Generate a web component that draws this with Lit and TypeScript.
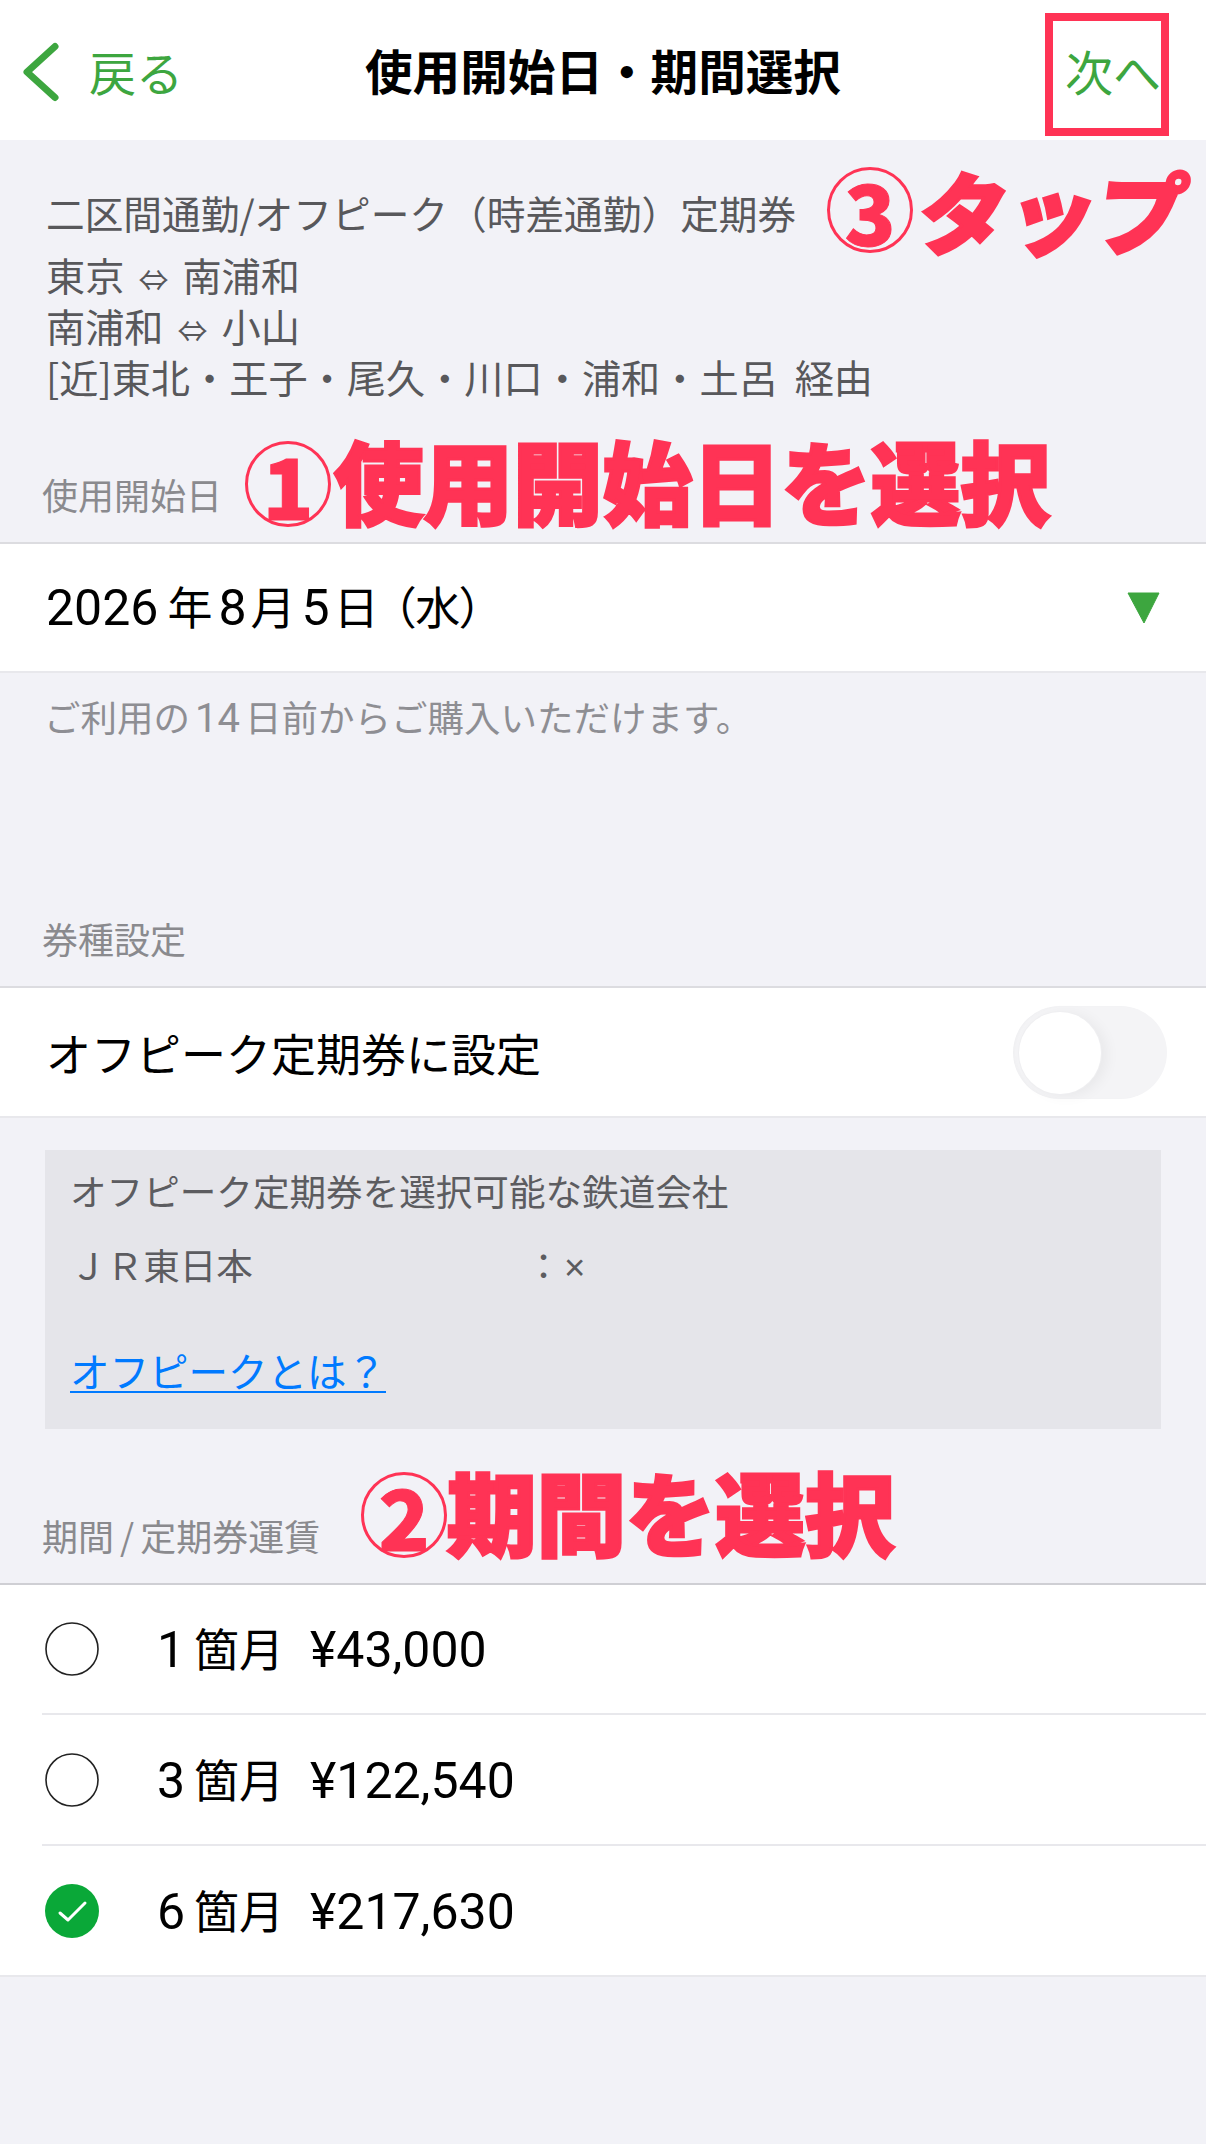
import { LitElement, html, css } from "lit";
import { customElement } from "lit/decorators.js";

@customElement("app-root")
export class AppRoot extends LitElement {
  static styles = css`
    :host { display: block; width: 1206px; height: 2144px; font-family: "Noto Sans CJK JP", "Noto Sans", sans-serif; }
    .page { position: relative; width: 1206px; height: 2144px; background: #f2f2f7; overflow: hidden; display: flex; flex-direction: column; }
    .nav { height: 140px; background: #fff; display: grid; grid-template-columns: 1fr auto 1fr; align-items: center; flex: none; }
    .back { display: flex; align-items: center; gap: 30px; padding-left: 23px; color: #3da63f; font-size: 47px; line-height: 1; }
    .back svg { display: block; margin-top: 4px; }
    .title { font-size: 47.6px; font-weight: 700; color: #000; line-height: 1; }
    .next { justify-self: end; padding-right: 45px; color: #3da63f; font-size: 48px; line-height: 1; }
    .route { padding: 41px 46px 0; color: #58585b; font-size: 39.2px; line-height: 51px; flex: none; }
    .route div { white-space: nowrap; }
    .route .l1 { font-size: 38.7px; line-height: 62px; margin-bottom: 6px; }
    .arr { font-size: 30px; line-height: 0; margin: 0 14px; }
    .sp { margin-left: 8px; }
    .label { color: #8a8a8e; font-size: 36px; line-height: 48px; padding-left: 42px; flex: none; }
    .label.first { margin-top: 68px; }
    .label.second { margin-top: 172px; }
    .label.third { margin-top: 82px; }
    .slash { margin: 0 6px; }
    .row { background: #fff; border-top: 2px solid #dcdce0; border-bottom: 2px solid #e8e8ec; box-sizing: border-box; display: flex; align-items: center; justify-content: space-between; padding: 0 46px; color: #000; font-size: 45px; line-height: 1; flex: none; margin-top: 24px; }
    .date { height: 131px; }
    .n { font-family: Roboto, sans-serif; font-size: 50px; margin: 0 4px 0 6px; }
    .n.y { margin: 0 9px 0 0; }
    .paren { font-feature-settings: "palt"; margin-left: 14px; }
    .tri { display: block; }
    .note { color: #8e8e93; font-size: 36.5px; line-height: 46px; padding: 21px 44px 0; flex: none; white-space: nowrap; }
    .note .n { font-size: 40px; margin: 0 5px; }
    .off { height: 132px; padding-right: 39px; }
    .switch { width: 154px; height: 93px; border-radius: 47px; background: #f4f4f6; position: relative; flex: none; box-shadow: inset 2px 0 3px rgba(0,0,0,.02); }
    .knob { position: absolute; left: 6px; top: 6px; width: 82px; height: 82px; border-radius: 50%; background: #fff; box-shadow: 0 0 0 1px #efeff1, 6px 2px 14px rgba(0,0,0,.05); }
    .info { margin: 32px 45px 0; height: 279px; background: #e5e5ea; color: #5c5c60; font-size: 36.6px; padding: 17px 25px 0; box-sizing: border-box; flex: none; }
    .info div { line-height: 48px; white-space: pre; }
    .info .jr { margin-top: 26px; }
    .x { font-family: "Liberation Sans", sans-serif; margin-left: 2px; }
    .info a { display: inline-block; margin-top: 52px; color: #007aff; font-size: 39.5px; text-decoration: underline; text-decoration-thickness: 2px; text-underline-offset: 4px; line-height: 52px; }
    .list { background: #fff; border-top: 2px solid #cfcfd4; border-bottom: 2px solid #e8e8ec; flex: none; margin-top: 24px; }
    .opt { height: 128px; display: flex; align-items: center; box-sizing: border-box; padding-left: 45px; font-size: 45px; color: #000; }
    .opt + .opt { height: 131px; border-top: 2px solid #e8e8ec; margin-left: 42px; padding-left: 3px; }
    .radio { width: 54px; height: 54px; flex: none; display: block; }
    .txt { margin-left: 58px; white-space: nowrap; line-height: 60px; }
    .digit { font-family: Roboto, sans-serif; font-size: 50px; display: inline-block; width: 37px; }
    .price { font-family: Roboto, sans-serif; font-size: 50px; margin-left: 26px; }
    .ann { position: absolute; color: #ff3355; font-weight: 900; font-size: 89.5px; line-height: 86px; height: 86px; white-space: nowrap; -webkit-text-stroke: 3px #ff3355; display: flex; align-items: center; }
    .circ { width: 86px; height: 86px; border: 3px solid #ff3355; border-radius: 50%; box-sizing: border-box; display: flex; align-items: center; justify-content: center; font-size: 84px; line-height: 1; flex: none; -webkit-text-stroke: 1px #ff3355; }
    .t { margin-bottom: 10px; }
    .a1 { left: 245px; top: 441px; }
    .a1 .t { margin-left: 3px; }
    .a2 { left: 361px; top: 1472px; }
    .a3 { left: 827px; top: 167px; }
    .a3 .t { display: inline-block; transform: skewX(-8deg); margin: 0 0 0 7px; font-size: 89px; }
    .box { position: absolute; left: 1045px; top: 13px; width: 124px; height: 123px; border: 8px solid #ff3355; box-sizing: border-box; }
  `;

  render() {
    const rows = [
      ["1", "¥43,000", false],
      ["3", "¥122,540", false],
      ["6", "¥217,630", true],
    ] as const;
    return html`
      <div class="page">
        <div class="nav">
          <div class="back">
            <svg width="36" height="60" viewBox="0 0 36 60"><path d="M32 4.5 L4 30 L32 55.5" fill="none" stroke="#3da63f" stroke-width="7" stroke-linecap="round" stroke-linejoin="round"/></svg>
            <span>戻る</span>
          </div>
          <div class="title">使用開始日・期間選択</div>
          <div class="next">次へ</div>
        </div>
        <div class="route">
          <div class="l1">二区間通勤/オフピーク（時差通勤）定期券</div>
          <div>東京<span class="arr">⇔</span>南浦和</div>
          <div>南浦和<span class="arr">⇔</span>小山</div>
          <div>[近]東北・王子・尾久・川口・浦和・土呂 <span class="sp">経由</span></div>
        </div>
        <div class="label first">使用開始日</div>
        <div class="row date">
          <span><span class="n y">2026</span>年<span class="n">8</span>月<span class="n">5</span>日<span class="paren">（水）</span></span>
          <svg class="tri" width="33" height="32" viewBox="0 0 33 32"><path d="M1 1 H32 L17 31 Z" fill="#3da63f" stroke="#3da63f" stroke-linejoin="round"/></svg>
        </div>
        <div class="note">ご利用の<span class="n">14</span>日前からご購入いただけます。</div>
        <div class="label second">券種設定</div>
        <div class="row off">
          <span>オフピーク定期券に設定</span>
          <div class="switch"><div class="knob"></div></div>
        </div>
        <div class="info">
          <div>オフピーク定期券を選択可能な鉄道会社</div>
          <div class="jr">ＪＲ東日本　　　　　　　  ：<span class="x">×</span></div>
          <a>オフピークとは？</a>
        </div>
        <div class="label third">期間<span class="slash">/</span>定期券運賃</div>
        <div class="list">
          ${rows.map(([d, p, on]) => html`
            <div class="opt">
              ${on
                ? html`<svg class="radio" viewBox="0 0 54 54"><circle cx="27" cy="27" r="27" fill="#0aa838"/><path d="M15 29 L23 36 L40 19" fill="none" stroke="#fff" stroke-width="3" stroke-linecap="round" stroke-linejoin="round"/></svg>`
                : html`<svg class="radio" viewBox="0 0 54 54"><circle cx="27" cy="27" r="26" fill="#fff" stroke="#222" stroke-width="1.6"/></svg>`}
              <span class="txt"><span class="digit">${d}</span>箇月<span class="price">${p}</span></span>
            </div>`)}
        </div>
        <div class="ann a1"><span class="circ">1</span><span class="t">使用開始日を選択</span></div>
        <div class="ann a2"><span class="circ">2</span><span class="t">期間を選択</span></div>
        <div class="ann a3"><span class="circ">3</span><span class="t">タップ</span></div>
        <div class="box"></div>
      </div>
    `;
  }
}
